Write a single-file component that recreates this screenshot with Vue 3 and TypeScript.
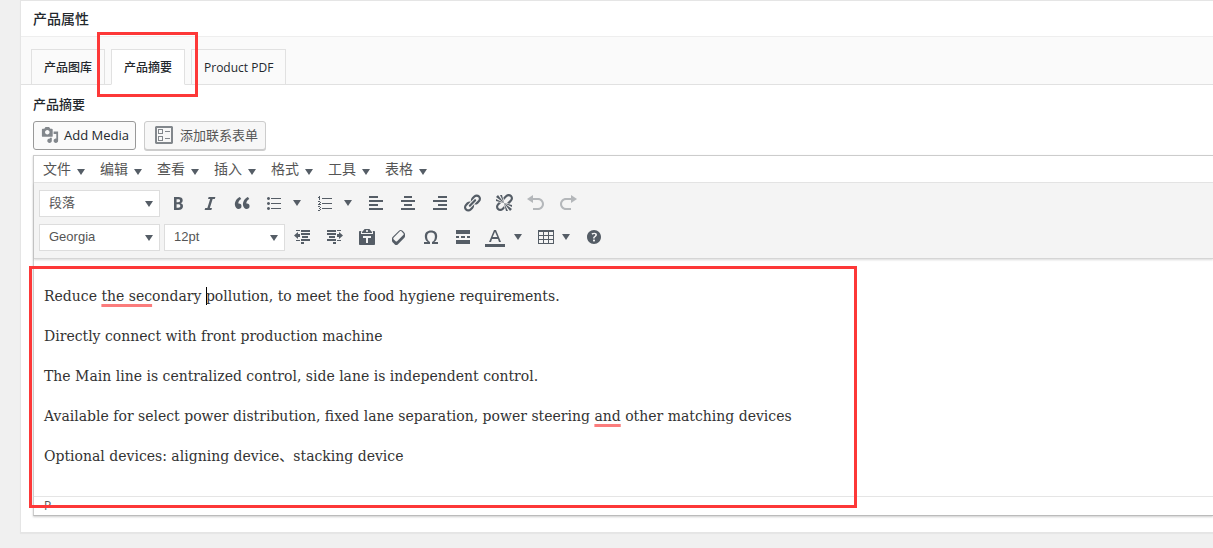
<script setup lang="ts">
import { ref } from 'vue'

interface Tool {
  id: string
  label: string
  paths: string[]
  caret?: 'wide' | 'narrow'
  disabled?: boolean
}

const tabs = ['产品图库', '产品摘要', 'Product PDF']
const activeTab = ref(1)
const menus = ['文件', '编辑', '查看', '插入', '格式', '工具', '表格']

const blockFormat = ref('段落')
const fontFamily = ref('Georgia')
const fontSize = ref('12pt')

const formatTools: Tool[] = [
  { id: 'bold', label: 'Bold', paths: ['M6 4v13h4.54c1.37 0 2.46-.33 3.26-1 .8-.66 1.2-1.58 1.2-2.77 0-.84-.17-1.51-.51-2.01s-.9-.85-1.67-1.03v-.09c.57-.1 1.02-.4 1.36-.9s.51-1.13.51-1.91c0-1.14-.39-1.98-1.17-2.5C12.75 4.26 11.5 4 9.78 4H6zm2.57 5.15V6.26h1.36c.73 0 1.27.11 1.61.32.34.22.51.58.51 1.07 0 .54-.16.92-.47 1.15s-.82.35-1.51.35h-1.5zm0 2.19h1.6c1.44 0 2.16.53 2.16 1.61 0 .6-.17 1.05-.51 1.34s-.86.43-1.57.43H8.57v-3.38z'] },
  { id: 'italic', label: 'Italic', paths: ['M14.78 6h-2.13l-2.8 9h2.12l-.62 2H4.6l.62-2h2.14l2.8-9H8.03l.62-2h6.75z'] },
  { id: 'quote', label: 'Blockquote', paths: ['M9.49 13.22c0-.74-.2-1.38-.61-1.9-.62-.78-1.83-.88-2.53-.72-.29-1.65 1.11-3.75 2.92-4.65L7.88 4c-2.73 1.3-5.42 4.28-4.96 8.05C3.21 14.43 4.59 16 6.54 16c.85 0 1.56-.25 2.12-.75s.83-1.18.83-2.03zm8.05 0c0-.74-.2-1.38-.61-1.9-.63-.78-1.83-.88-2.53-.72-.29-1.65 1.11-3.75 2.92-4.65L15.93 4c-2.73 1.3-5.41 4.28-4.95 8.05.29 2.38 1.66 3.95 3.61 3.95.85 0 1.56-.25 2.12-.75s.83-1.18.83-2.03z'] },
  { id: 'bullist', label: 'Bulleted list', caret: 'wide', paths: ['M4.500 4a1.500 1.500 0 1 0 .001 0zM4.500 9a1.500 1.500 0 1 0 .001 0zM4.500 14a1.500 1.500 0 1 0 .001 0zM7 5h10v1H7zM7 10h10v1H7zM7 15h10v1H7z'] },
  { id: 'numlist', label: 'Numbered list', caret: 'wide', paths: ['M7 5h10v1H7zM7 10h10v1H7zM7 15h10v1H7z', 'M4 3h1v4H4zM3 4h1v1H3zM3 8h2v1H3zM5 9h1v1H5zM4 10h1v1H4zM3 11h3v1H3zM3 13h2v1H3zM5 14h1v1H5zM4 15h1v1H4zM5 16h1v1H5zM3 17h2v1H3z'] },
  { id: 'left', label: 'Align left', paths: ['M12 5V3H3v2h9zm5 4V7H3v2h14zm-5 4v-2H3v2h9zm5 4v-2H3v2h14z'] },
  { id: 'center', label: 'Align center', paths: ['M14 5V3H6v2h8zm3 4V7H3v2h14zm-3 4v-2H6v2h8zm3 4v-2H3v2h14z'] },
  { id: 'right', label: 'Align right', paths: ['M17 5V3H8v2h9zm0 4V7H3v2h14zm0 4v-2H8v2h9zm0 4v-2H3v2h14z'] },
  { id: 'link', label: 'Insert link', paths: ['M17.74 2.76c1.68 1.69 1.68 4.41 0 6.1l-1.53 1.52c-1.12 1.12-2.7 1.47-4.14 1.09l2.62-2.61.76-.77.76-.76c.84-.84.84-2.2 0-3.04-.84-.85-2.2-.85-3.04 0l-.77.76-3.38 3.38c-.37-1.44-.02-3.02 1.1-4.14l1.52-1.53c1.69-1.68 4.42-1.68 6.1 0zM8.59 13.43l5.34-5.34c.42-.42.42-1.1 0-1.52-.44-.43-1.13-.39-1.53 0l-5.33 5.34c-.42.42-.42 1.1 0 1.52.44.43 1.13.39 1.52 0zm-.76 2.29l4.14-4.15c.38 1.44.03 3.02-1.09 4.14l-1.52 1.53c-1.69 1.68-4.41 1.68-6.1 0-1.68-1.68-1.68-4.42 0-6.1l1.53-1.52c1.12-1.12 2.7-1.47 4.14-1.1l-4.14 4.15c-.85.84-.85 2.2 0 3.05.84.84 2.2.84 3.04 0z'] },
  { id: 'unlink', label: 'Remove link', paths: ['M17.74 2.26c1.68 1.69 1.68 4.41 0 6.1l-1.53 1.52c-.32.33-.69.58-1.08.77L13 10l1.69-1.64.76-.77.76-.76c.84-.84.84-2.2 0-3.04-.84-.85-2.2-.85-3.04 0l-.77.76-.76.76L10 7l-.65-2.14c.19-.38.44-.75.77-1.07l1.52-1.53c1.69-1.68 4.42-1.68 6.1 0zM2 4l8 6-6-8zm4-2l4 8-2-8H6zM2 6l8 4-8-2V6zm7.36 7.69L10 13l.74 2.35-1.38 1.39c-1.69 1.68-4.41 1.68-6.1 0-1.68-1.68-1.68-4.42 0-6.1l1.39-1.38L7 10l-.69.64-1.52 1.53c-.85.84-.85 2.2 0 3.04.84.85 2.2.85 3.04 0zM18 16l-8-6 6 8zm-4 2l-4-8 2 8h2zm4-4l-8-4 8 2v2z'] },
  { id: 'undo', label: 'Undo', disabled: true, paths: ['M12 5H7V2L1 6l6 4V7h5c2.2 0 4 1.8 4 4s-1.8 4-4 4H7v2h5c3.3 0 6-2.7 6-6s-2.7-6-6-6z'] },
  { id: 'redo', label: 'Redo', disabled: true, paths: ['M8 5h5V2l6 4-6 4V7H8c-2.2 0-4 1.8-4 4s1.8 4 4 4h5v2H8c-3.3 0-6-2.7-6-6s2.7-6 6-6z'] },
]

const insertTools: Tool[] = [
  { id: 'outdent', label: 'Decrease indent', paths: ['M8 3h9v2H8zM8 6h9v2H8zM9 9h6v2H9zM8 12h9v2H8zM8 15h3v2H8zM3 3h4v1H3zM3 13h4v1H3zM5 5v7L1 8.500zM5 7h2v3H5z'] },
  { id: 'indent', label: 'Increase indent', paths: ['M2 3h9v2H2zM2 6h9v2H2zM4 9h6v2H4zM2 12h9v2H2zM8 15h3v2H8zM12 3h4v1h-4zM12 13h4v1h-4zM14 5v7l4-3.500zM12 7h2v3h-2z'] },
  { id: 'paste', label: 'Paste as text', paths: ['M12.38 2L15 5v1H5V5l2.64-3h4.74zM10 5c.55 0 1-.44 1-1 0-.55-.45-1-1-1s-1 .45-1 1c0 .56.45 1 1 1zm5.45-1H17c.55 0 1 .45 1 1v12c0 .56-.45 1-1 1H3c-.55 0-1-.44-1-1V5c0-.55.45-1 1-1h1.55L4 4.63V7h12V4.63zM14 11V9H6v2h3v5h2v-5h3z'] },
  { id: 'clear', label: 'Clear formatting', paths: ['M14.29 4.59l1.1 1.11c.41.4.61.94.61 1.47v2.12c0 .53-.2 1.07-.61 1.47l-6.63 6.63c-.4.41-.94.61-1.47.61s-1.07-.2-1.47-.61l-1.11-1.1-1.1-1.11c-.41-.4-.61-.94-.61-1.47v-2.12c0-.54.2-1.07.61-1.48l6.63-6.62c.4-.41.94-.61 1.47-.61s1.06.2 1.47.61zm-6.21 9.7l6.42-6.42c.39-.39.39-1.03 0-1.43L12.36 4.3c-.19-.19-.45-.29-.72-.29s-.52.1-.71.29l-6.42 6.42c-.39.4-.39 1.04 0 1.43l2.14 2.14c.38.38 1.04.38 1.43 0z'] },
  { id: 'char', label: 'Special character', paths: ['M10 5.4c1.27 0 2.24.36 2.91 1.08.66.71 1 1.76 1 3.13 0 1.28-.23 2.37-.69 3.27-.47.89-1.27 1.52-2.22 2.12v2h6v-2h-3.69c.92-.64 1.62-1.34 2.12-2.34.49-1.01.74-2.13.74-3.35 0-1.78-.55-3.19-1.65-4.22S11.92 3.54 10 3.54s-3.43.53-4.52 1.57c-1.1 1.04-1.65 2.44-1.65 4.2 0 1.21.24 2.31.73 3.33.48 1.01 1.19 1.71 2.1 2.36H3v2h6v-2c-.98-.64-1.8-1.28-2.24-2.17-.45-.89-.67-1.96-.67-3.22 0-1.37.33-2.41 1-3.13C7.750 5.760 8.720 5.400 10 5.400z'] },
  { id: 'more', label: 'Read more tag', paths: ['M17 7V3H3v4h14zM6 11V9H3v2h3zm6 0V9H8v2h4zm5 0V9h-3v2h3zm0 6v-4H3v4h14z'] },
  { id: 'color', label: 'Text color', caret: 'wide', paths: ['M9 3h2l5 12h-2l-1-3H7l-1 3H4zM7.700 10h4.600L10 4.800zM0 17h20v3H0z'] },
  { id: 'table', label: 'Table', caret: 'narrow', paths: ['M2 3h16v14H2zM3 5v3h4V5zM8 5v3h4V5zM13 5v3h4V5zM3 9v3h4V9zM8 9v3h4V9zM13 9v3h4V9zM3 13v3h4v-3zM8 13v3h4v-3zM13 13v3h4v-3z'] },
  { id: 'help', label: 'Keyboard shortcuts', paths: ['M17 10c0-3.870-3.140-7-7-7-3.870 0-7 3.130-7 7s3.130 7 7 7c3.860 0 7-3.130 7-7zm-6.300 1.480H9.140v-.43c0-.38.08-.7.24-.98s.46-.57.88-.89c.41-.29.68-.53.81-.71.14-.18.2-.39.2-.62 0-.25-.09-.44-.28-.58-.19-.13-.45-.19-.79-.19-.58 0-1.250.19-2 .57l-.64-1.280c.87-.49 1.800-.74 2.770-.74.81 0 1.450.2 1.920.58.48.39.71.91.71 1.550 0 .43-.09.8-.29 1.110-.19.32-.57.67-1.110 1.060-.38.28-.61.49-.71.63-.1.15-.15.34-.15.57v.35zm-1.470 2.740c-.18-.17-.27-.42-.27-.73 0-.33.08-.58.26-.75s.43-.25.77-.25c.32 0 .57.09.75.26s.27.42.27.74c0 .3-.09.55-.27.72-.18.18-.43.27-.75.27-.33 0-.58-.09-.76-.26z'] },
]
</script>

<template>
  <main class="page">
    <section class="panel">
      <h2 class="title">产品属性</h2>

      <div class="tabs" role="tablist">
        <div v-for="(tab, i) in tabs" :key="tab" class="tab-slot">
          <button type="button" role="tab" class="tab" :class="{ active: i === activeTab }" :aria-selected="i === activeTab" @click="activeTab = i">{{ tab }}</button>
          <span v-if="i === 1" class="mark mark-tab"></span>
        </div>
      </div>

      <div class="body">
        <h3 id="summary-label" class="label">产品摘要</h3>
        <div class="media">
          <button type="button" class="media-btn focused">
            <svg class="media-icon" viewBox="0 0 20 20" aria-hidden="true"><path fill-rule="evenodd" d="M13 11V4c0-.55-.45-1-1-1h-1.670L9 1H5L3.670 3H2c-.55 0-1 .45-1 1v7c0 .55.45 1 1 1h10c.55 0 1-.45 1-1zM7 4.500c1.380 0 2.500 1.120 2.500 2.500S8.380 9.500 7 9.500 4.500 8.380 4.500 7 5.620 4.500 7 4.500zM14 6h5v10.500c0 1.380-1.120 2.500-2.500 2.500S14 17.880 14 16.500s1.120-2.500 2.500-2.500c.17 0 .34.02.5.05V9h-3V6zm-4 8.050V13h2v3.500c0 1.380-1.120 2.500-2.500 2.500S7 17.880 7 16.500 8.120 14 9.500 14c.17 0 .34.02.5.05z" /></svg>
            <span>Add Media</span>
          </button>
          <button type="button" class="media-btn">
            <svg class="form-icon" viewBox="0 0 18 18" aria-hidden="true"><path fill-rule="evenodd" d="M1 0h16l1 1v16l-1 1H1l-1-1V1zM2 2v14h14V2zM3 3h5v5H3zM4 4v3h3V4zM3 10h5v5H3zM4 11v3h3v-3zM10 5h5v1h-5zM10 12h5v1h-5z" /></svg>
            <span>添加联系表单</span>
          </button>
        </div>

        <div class="editor">
          <div class="menubar" role="menubar">
            <button v-for="menu in menus" :key="menu" type="button" role="menuitem" class="menu">
              {{ menu }}<i class="caret"></i>
            </button>
          </div>

          <div class="toolbar">
            <div class="row">
              <label class="picker">
                <select v-model="blockFormat" aria-label="Block format"><option>段落</option></select>
                <i class="caret"></i>
              </label>
              <button v-for="tool in formatTools" :key="tool.id" type="button" class="tool" :class="tool.caret" :disabled="tool.disabled" :aria-label="tool.label">
                <svg viewBox="0 0 20 20" aria-hidden="true"><path v-for="(d, i) in tool.paths" :key="i" :d="d" fill-rule="evenodd" /></svg>
                <i v-if="tool.caret" class="caret"></i>
              </button>
            </div>
            <div class="row">
              <label class="picker">
                <select v-model="fontFamily" aria-label="Font family"><option>Georgia</option></select>
                <i class="caret"></i>
              </label>
              <label class="picker">
                <select v-model="fontSize" aria-label="Font size"><option>12pt</option></select>
                <i class="caret"></i>
              </label>
              <button v-for="tool in insertTools" :key="tool.id" type="button" class="tool" :class="tool.caret" :aria-label="tool.label">
                <svg viewBox="0 0 20 20" aria-hidden="true"><path v-for="(d, i) in tool.paths" :key="i" :d="d" fill-rule="evenodd" /></svg>
                <i v-if="tool.caret" class="caret"></i>
              </button>
            </div>
          </div>

          <div class="content" role="textbox" aria-multiline="true" aria-labelledby="summary-label" contenteditable="true" spellcheck="false">
            <p>Reduce <span class="flag">the sec</span>ondary <span class="cursor"></span>pollution, to meet the food hygiene requirements.</p>
            <p>Directly connect with front production machine</p>
            <p>The Main line is centralized control, side lane is independent control.</p>
            <p>Available for select power distribution, fixed lane separation, power steering <span class="flag">and</span> other matching devices</p>
            <p>Optional devices: aligning device、stacking device</p>
          </div>

          <div class="status">P</div>
          <span class="mark mark-content"></span>
        </div>
      </div>
    </section>
  </main>
</template>

<style>
body {
  background: #f0f0f0;
}
</style>

<style scoped>
.page {
  padding: 0 0 15px 20px;
  overflow: hidden;
  background: #f0f0f0;
  color: #23282d;
  font-family: "Open Sans", "Noto Sans CJK SC", sans-serif;
  font-size: 13px;
}
.page * {
  box-sizing: border-box;
}
button,
select {
  margin: 0;
  font-family: inherit;
}
.panel {
  border: 1px solid #e5e5e5;
  border-right: 0;
  background: #fff;
  box-shadow: 0 1px 1px rgba(0, 0, 0, 0.04);
}
.title {
  margin: 0;
  padding: 0 12px;
  border-bottom: 1px solid #eee;
  font-size: 14px;
  font-weight: 500;
  line-height: 35px;
}
.tabs {
  display: flex;
  gap: 6px;
  padding: 12px 10px 0;
  border-bottom: 1px solid #e1e1e1;
  background: #fafafa;
}
.tab-slot {
  position: relative;
  margin-bottom: -1px;
}
.tab {
  display: block;
  height: 36px;
  padding: 0 12px;
  border: 1px solid #e1e1e1;
  background: #fafafa;
  color: #23282d;
  font-size: 12px;
  font-weight: 500;
}
.tab.active {
  border-bottom-color: #fff;
  background: #fff;
}
.mark {
  position: absolute;
  z-index: 2;
  border: 3px solid #fd3838;
  pointer-events: none;
}
.mark-tab {
  inset: -17px -13px -12px -14px;
}
.mark-content {
  top: 110px;
  bottom: 7px;
  left: -5px;
  width: 828px;
}
.body {
  padding: 10px 0 16px 12px;
}
.label {
  margin: 0 0 8px;
  font-size: 13px;
  font-weight: 500;
  line-height: 18px;
}
.media {
  display: flex;
  gap: 8px;
  margin-bottom: 5px;
}
.media-btn {
  display: flex;
  align-items: center;
  gap: 7px;
  height: 29px;
  padding: 0 7px 2px 10px;
  border: 1px solid #ccc;
  border-radius: 3px;
  background: #f7f7f7;
  box-shadow: 0 1px 0 #ccc;
  color: #555;
  font-size: 13px;
}
.media-btn.focused {
  gap: 4px;
  padding: 0 6px 2px;
  border-color: #999;
  background: #fafafa;
  box-shadow: none;
  color: #23282d;
}
.media-icon,
.form-icon {
  width: 18px;
  height: 18px;
  fill: #82878c;
}
.media-icon {
  width: 20px;
}
.editor {
  position: relative;
  border: 1px solid #ccc;
  border-right: 0;
  border-bottom-color: #bbb;
  box-shadow: 0 1px 2px rgba(0, 0, 0, 0.2);
}
.menubar {
  display: flex;
  padding-left: 1px;
  border-bottom: 1px solid #e5e5e5;
}
.menu {
  display: flex;
  align-items: center;
  gap: 6px;
  height: 26px;
  padding: 0 7px 2px 8px;
  border: 0;
  background: none;
  color: #555;
  font-size: 14px;
}
.caret {
  width: 0;
  height: 0;
  border-top: 6px solid #555d66;
  border-right: 4px solid transparent;
  border-left: 4px solid transparent;
}
.menu .caret {
  margin-top: 7px;
}
.toolbar {
  display: flex;
  flex-direction: column;
  gap: 6px;
  padding: 6px 5px 7px;
  border-bottom: 1px solid #d5d5d5;
  background: #f4f4f4;
  box-shadow: 0 1px 2px rgba(0, 0, 0, 0.15);
}
.row {
  display: flex;
  align-items: center;
  gap: 4px;
  height: 28px;
}
.picker {
  position: relative;
  width: 121px;
}
.picker select {
  display: block;
  width: 100%;
  height: 27px;
  padding: 0 24px 2px 9px;
  appearance: none;
  border: 1px solid #ddd;
  border-radius: 0;
  background: #fff;
  color: #555;
  font-family: "Liberation Sans", "Noto Sans CJK SC", sans-serif;
  font-size: 13px;
}
.picker .caret {
  position: absolute;
  top: 11px;
  right: 7px;
  pointer-events: none;
}
.tool {
  display: flex;
  align-items: center;
  width: 28px;
  height: 28px;
  padding: 0 4px;
  border: 0;
  background: none;
}
.tool svg {
  flex: none;
  width: 20px;
  height: 20px;
  fill: #555d66;
}
.tool.wide {
  gap: 9px;
  width: 47px;
}
.tool.narrow {
  gap: 6px;
  width: 44px;
}
.tool:disabled svg {
  opacity: 0.4;
}
.content {
  min-height: 237px;
  padding: 25px 10px 0;
  outline: 0;
  color: #333;
  font-family: "DejaVu Serif", "Noto Sans CJK SC", serif;
  font-size: 14px;
  line-height: 24px;
}
.content p {
  margin: 0 0 16px;
}
.flag {
  text-decoration: underline 3px #fb7c7c;
  text-decoration-skip-ink: none;
  text-underline-offset: 3px;
}
.cursor {
  display: inline-block;
  width: 1px;
  height: 18px;
  margin-right: -1px;
  background: #000;
  vertical-align: -4px;
}
.status {
  height: 19px;
  padding: 0 10px;
  border-top: 1px solid #e5e5e5;
  color: #555;
  font-size: 12px;
  line-height: 18px;
}
</style>
